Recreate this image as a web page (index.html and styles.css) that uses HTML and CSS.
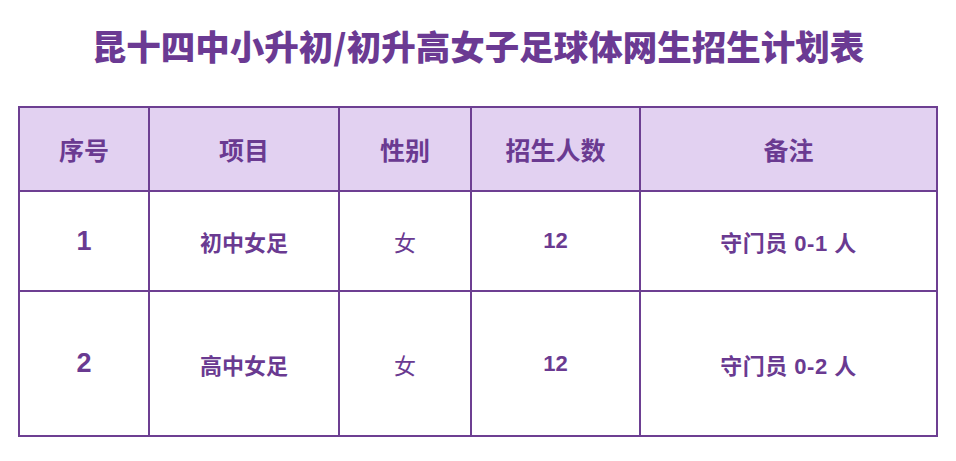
FILE: index.html
```html
<!DOCTYPE html>
<html lang="zh">
<head>
<meta charset="utf-8">
<link rel="stylesheet" href="styles.css">
</head>
<body>
<div class="page">
  <h1 class="title">昆十四中小升初/初升高女子足球体网生招生计划表</h1>
  <table class="plan">
    <colgroup>
      <col class="c1"><col class="c2"><col class="c3"><col class="c4"><col class="c5">
    </colgroup>
    <thead>
      <tr class="head">
        <th>序号</th><th>项目</th><th>性别</th><th>招生人数</th><th>备注</th>
      </tr>
    </thead>
    <tbody>
      <tr class="r1">
        <td class="num">1</td><td class="proj">初中女足</td><td class="sex">女</td><td class="cnt">12</td><td class="note">守门员 0-1 人</td>
      </tr>
      <tr class="r2">
        <td class="num">2</td><td class="proj">高中女足</td><td class="sex">女</td><td class="cnt">12</td><td class="note">守门员 0-2 人</td>
      </tr>
    </tbody>
  </table>
</div>
</body>
</html>
```
FILE: styles.css
```css
html, body {
  margin: 0;
  padding: 0;
  background: #ffffff;
}
body {
  font-family: "Noto Sans CJK SC", "Noto Sans", sans-serif;
  color: #6a3a91;
}
.page {
  width: 956px;
  height: 461px;
  padding-top: 22px;
  box-sizing: border-box;
}
.title {
  margin: 0;
  text-align: center;
  font-size: 34.5px;
  line-height: 46px;
  font-weight: 900;
  color: #6b3a93;
}
.plan {
  margin: 38px 0 0 18px;
  border-collapse: collapse;
  table-layout: fixed;
  width: 918px;
}
.c1 { width: 130px; }
.c2 { width: 190px; }
.c3 { width: 132px; }
.c4 { width: 169px; }
.c5 { width: 297px; }
.plan th, .plan td {
  border: 2px solid #6d3f92;
  text-align: center;
  vertical-align: middle;
  padding: 0;
}
.head {
  height: 84px;
  background: #e2d1f1;
}
.head th {
  font-size: 25px;
  font-weight: 700;
  color: #6a3a91;
}
.r1 { height: 100px; }
.r2 { height: 145px; }
.num {
  font-family: "Liberation Sans", "Noto Sans", sans-serif;
  font-size: 27px;
  font-weight: 700;
}
.proj {
  font-size: 22px;
  font-weight: 700;
}
.sex {
  font-size: 22px;
  font-weight: 400;
}
.cnt {
  font-family: "Liberation Sans", "Noto Sans", sans-serif;
  font-size: 22px;
  font-weight: 700;
}
.note {
  font-family: "Liberation Sans", "Noto Sans CJK SC", sans-serif;
  font-size: 22px;
  font-weight: 700;
  letter-spacing: 0.5px;
}
```
